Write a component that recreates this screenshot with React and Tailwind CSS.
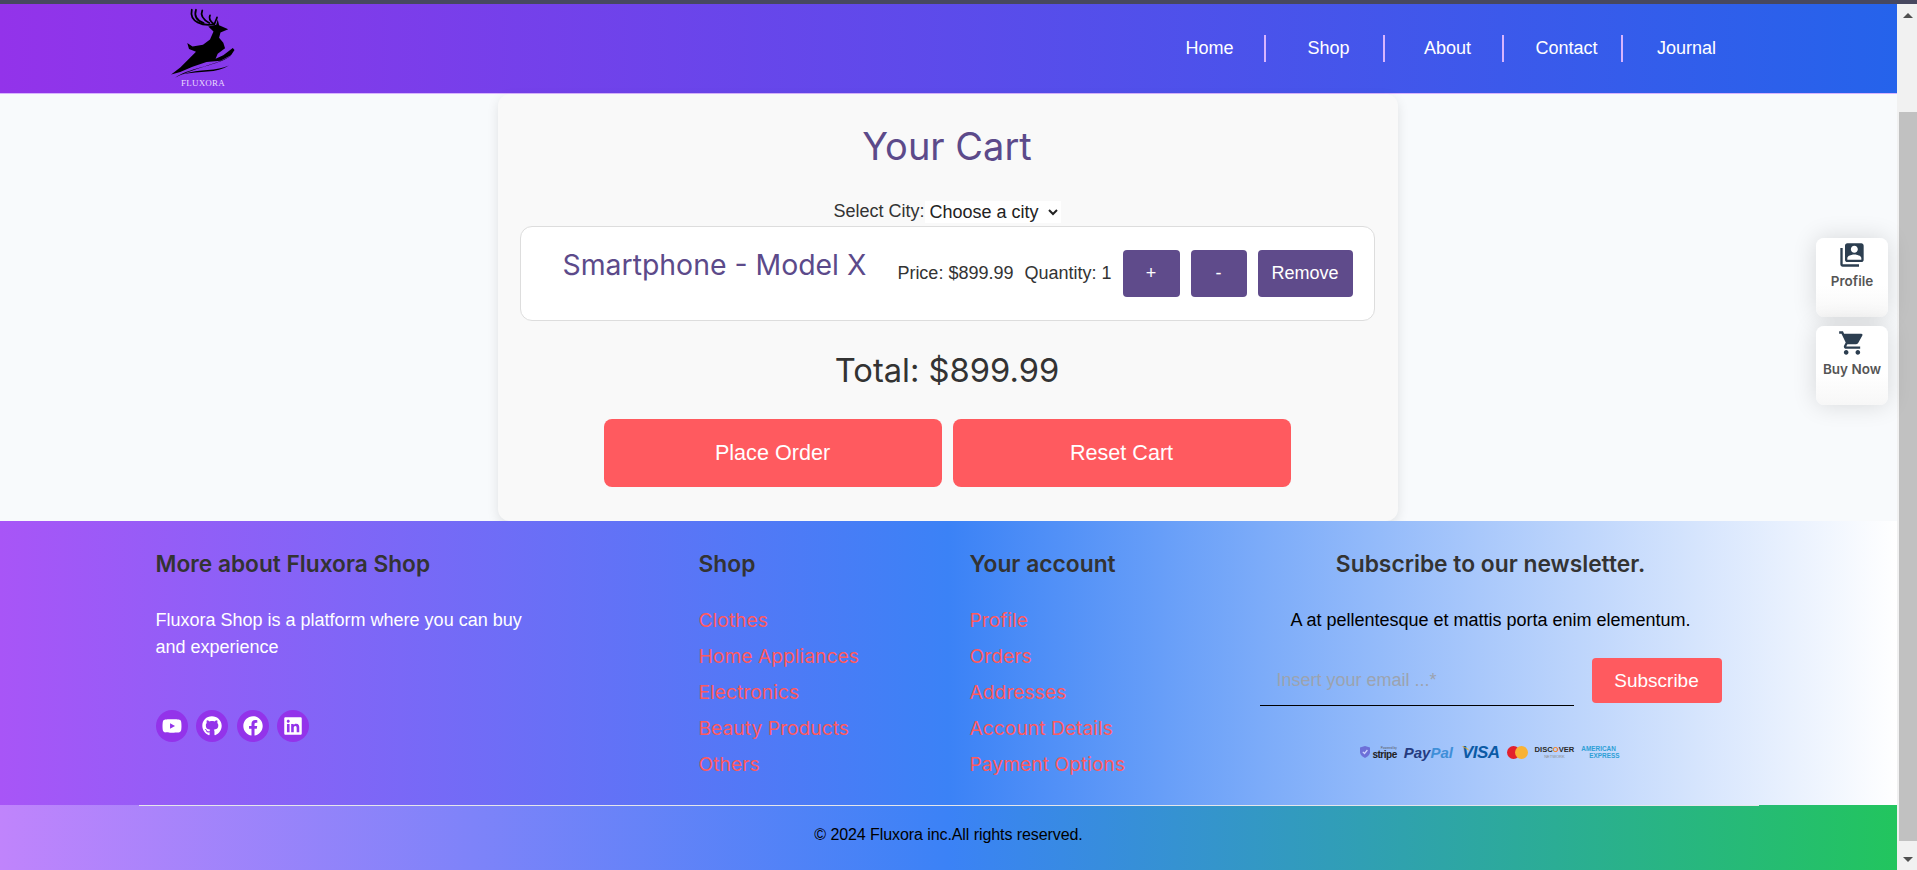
import React from 'react';
import { FaYoutube, FaGithub, FaFacebook, FaLinkedin } from 'react-icons/fa';
import { MdSwitchAccount, MdShoppingCart } from 'react-icons/md';

const NAV_ITEMS = ['Home', 'Shop', 'About', 'Contact', 'Journal'];
const SHOP_LINKS = ['Clothes', 'Home Appliances', 'Electronics', 'Beauty Products', 'Others'];
const ACCOUNT_LINKS = ['Profile', 'Orders', 'Addresses', 'Account Details', 'Payment Options'];
const SOCIALS = [FaYoutube, FaGithub, FaFacebook, FaLinkedin];

const Logo = () => (
  <div className="flex flex-col items-center w-[70px]">
    <svg viewBox="510 25 200 200" className="w-[70px] h-[70px]">
      <path
        d="M682 86 L660 95 L656 110 L668 124 L673 140 L652 156 L646 170 L668 160 L695 139 L700 145 L690 160 L660 176 L620 179 L580 193 L545 208 L519 215 L545 195 L570 170 L590 150 L570 142 L565 125 L580 135 L610 130 L630 115 L640 92 L625 78 L648 73 L652 58 L656 74 Z"
        fill="#000"
      />
      <path d="M530 224 C570 196 630 196 692 160 C660 186 600 190 530 224 Z" fill="#000" />
      <path d="M552 214 C600 198 650 206 684 189 C650 212 600 204 552 214 Z" fill="#000" />
      <g fill="none" stroke="#000" strokeWidth="5" strokeLinecap="round">
        <path d="M640 72 C610 76 570 66 578 30" />
        <path d="M612 68 C590 60 584 48 590 30" />
        <path d="M628 68 C610 58 602 46 608 32" />
        <path d="M640 70 C630 62 626 54 630 46" />
        <path d="M642 72 C645 64 648 58 650 52" />
      </g>
    </svg>
    <span className="font-['Liberation_Serif',serif] text-[9px] leading-[10px] text-[#eadcff] tracking-[0.2px]">FLUXORA</span>
  </div>
);

const Header = () => (
  <header className="h-[90px] flex items-center justify-between pl-[168px] border-b border-[#d8b4fe] bg-[linear-gradient(90deg,#9333ea,#2563eb)]">
    <Logo />
    <nav className="flex items-center pr-[155px]">
      {NAV_ITEMS.map((item, i) => (
        <a
          key={item}
          className={`w-[119px] h-[27px] pl-[8px] flex items-center justify-center text-[18px] text-white ${i < 4 ? 'border-r-2 border-[#d8b4fe]' : ''}`}
        >
          {item}
        </a>
      ))}
    </nav>
  </header>
);

const CartCard = () => (
  <section className="w-[900px] ml-[498px] h-[428px] rounded-xl bg-[#f9f9f9] shadow-[0_4px_12px_rgba(0,0,0,0.1)] pl-[21px] pr-[23px] pt-[25px] flex flex-col items-center">
    <h2 className="font-['Inter',sans-serif] text-[38px] leading-[54px] text-[#5c4a8a]">Your Cart</h2>
    <label className="mt-[28px] h-[22px] flex items-center text-[18px] text-[#333]">
      <span>Select City:</span>
      <select defaultValue="" className="w-[136px] pl-[1px] bg-white text-[18px] h-[22px] text-[#222]">
        <option value="">Choose a city</option>
      </select>
    </label>
    <div className="mt-[3px] w-[855px] h-[95px] rounded-xl border border-[#ddd] bg-white flex items-center justify-between pl-[42px] pr-[21px]">
      <h3 className="font-['Inter',sans-serif] text-[28.4px] leading-[40px] mb-[16px] text-[#5c4a8a]">Smartphone - Model X</h3>
      <div className="flex items-center text-[18px] text-[#333]">
        <span className="mr-[11px]">Price: $899.99</span>
        <span className="mr-[11px]">Quantity: 1</span>
        <div className="flex items-center gap-[11px] text-white">
          <button className="w-[57px] h-[47px] rounded bg-[#5f4b8b]">+</button>
          <button className="w-[56px] h-[47px] rounded bg-[#5f4b8b]">-</button>
          <button className="w-[95px] h-[47px] rounded bg-[#5f4b8b]">Remove</button>
        </div>
      </div>
    </div>
    <div className="mt-[25px] font-['Inter',sans-serif] text-[32.7px] leading-[48px] text-[#333]">Total: $899.99</div>
    <div className="mt-[25px] flex gap-[11px]">
      <button className="w-[338px] h-[68px] rounded-lg bg-[#ff5a5f] text-white text-[21.6px]">Place Order</button>
      <button className="w-[338px] h-[68px] rounded-lg bg-[#ff5a5f] text-white text-[21.6px]">Reset Cart</button>
    </div>
  </section>
);

const LinkColumn = ({ title, links }) => (
  <div>
    <h4 className="font-['Inter',sans-serif] font-semibold text-[22.8px] leading-[30px] text-[#333]">{title}</h4>
    <ul className="mt-[28px] flex flex-col gap-[9px] font-['Inter',sans-serif] text-[19.3px] leading-[27px] text-[#ff5a5f]">
      {links.map((link) => (
        <li key={link}>{link}</li>
      ))}
    </ul>
  </div>
);

const PaymentLogos = () => (
  <div className="mt-[36px] h-[20px] flex items-center justify-center gap-[7px] pr-[1px]">
    <div className="flex items-center gap-[2px]">
      <svg viewBox="0 0 10 12" className="w-[10px] h-[12px]">
        <path d="M0 1.5 L5 0 L10 1.5 V6 C10 9 7 11 5 12 C3 11 0 9 0 6 Z" fill="#6d6fd8" />
        <path d="M2.8 5.8 L4.5 7.5 L7.4 4" fill="none" stroke="#cdd3ff" strokeWidth="1.2" />
      </svg>
      <div className="flex flex-col items-end">
        <span className="text-[3px] leading-[4px] text-[#555]">Powered by</span>
        <span className="font-bold text-[10px] leading-[9px] tracking-[-0.5px] text-[#222]">stripe</span>
      </div>
    </div>
    <span className="font-bold italic text-[15px] leading-none text-[#253b80]">
      Pay<span className="text-[#3f8fd8]">Pal</span>
    </span>
    <div className="relative ml-[2px]">
      <span className="block font-bold italic text-[17px] leading-none tracking-[-0.5px] text-[#0b5aa5]">VISA</span>
      <svg viewBox="0 0 10 6" className="absolute left-[-1px] top-[2px] w-[9px] h-[5px]">
        <path d="M0 0 C4 0.5 7 2 10 6 C7 4 4 2 0 0 Z" fill="#f2ae14" />
      </svg>
    </div>
    <svg viewBox="0 0 21 13" className="w-[21px] h-[13px]">
      <circle cx="6.5" cy="6.5" r="6.5" fill="#e3202c" />
      <circle cx="14.5" cy="6.5" r="6.5" fill="#f9b233" />
    </svg>
    <div className="flex flex-col items-center">
      <span className="text-[7.6px] leading-[9px] font-bold text-[#2a2a2a]">
        DISC<span className="text-[#f58220]">O</span>VER
      </span>
      <span className="text-[4px] leading-[5px] text-[#8a8a8a]">NETWORK</span>
    </div>
    <div className="flex flex-col items-start font-bold text-[6.4px] leading-[7px] text-[#2e9fd6]">
      <span>AMERICAN</span>
      <span className="ml-[8px]">EXPRESS</span>
    </div>
  </div>
);

const Footer = () => (
  <footer>
    <div className="h-[284px] bg-[linear-gradient(90deg,#a855f7,#3b82f6,#ffffff)]">
      <div className="w-[1620px] mx-auto pl-[17px] pt-[28px] grid grid-cols-[543px_271px_290px_462px]">
        <div>
          <h4 className="font-['Inter',sans-serif] font-semibold text-[22.7px] leading-[30px] text-[#333]">More about Fluxora Shop</h4>
          <p className="mt-[28px] w-[400px] text-[18px] leading-[27px] text-white">Fluxora Shop is a platform where you can buy and experience</p>
          <div className="mt-[49px] flex gap-[8.5px]">
            {SOCIALS.map((Icon, i) => (
              <span key={i} className="w-[32px] h-[32px] rounded-full bg-[#9333ea] flex items-center justify-center text-white text-[20px]">
                <Icon />
              </span>
            ))}
          </div>
        </div>
        <LinkColumn title="Shop" links={SHOP_LINKS} />
        <LinkColumn title="Your account" links={ACCOUNT_LINKS} />
        <div>
          <h4 className="text-center font-['Inter',sans-serif] font-semibold text-[22.8px] leading-[30px] text-[#333]">Subscribe to our newsletter.</h4>
          <p className="mt-[28px] text-center text-[18px] leading-[27px] text-black">A at pellentesque et mattis porta enim elementum.</p>
          <div className="mt-[24px] flex items-start gap-[18px]">
            <input
              placeholder="Insert your email ...*"
              className="w-[314px] h-[48px] pl-[17px] pb-[2px] bg-transparent border-b border-black text-[18px] placeholder:text-[#9ca3af]"
            />
            <button className="w-[130px] h-[45px] pt-[2px] rounded bg-[#ff5a5f] text-white text-[19px]">Subscribe</button>
          </div>
          <PaymentLogos />
        </div>
      </div>
    </div>
    <div className="h-[65px] bg-[linear-gradient(90deg,#c084fc,#3b82f6,#22c55e)]">
      <div className="w-[1620px] mx-auto border-t border-[#e5e7eb] h-full flex items-center justify-center pb-[7px] text-[16px] tracking-[-0.08px] text-black">
        © 2024 Fluxora inc.All rights reserved.
      </div>
    </div>
  </footer>
);

const SideButton = ({ icon: Icon, label }) => (
  <div className="w-[72px] h-[79px] pt-[3px] rounded-lg bg-[linear-gradient(180deg,#ffffff,#ffffff_60%,#f7f7f7)] shadow-[0_0_24px_rgba(0,0,0,0.14)] flex flex-col items-center">
    <Icon className="text-[28px] text-[#2c3e50] shrink-0" />
    <span className="mt-[2px] font-['Inter',sans-serif] font-semibold text-[13.5px] leading-[20px] text-[#555]">{label}</span>
  </div>
);

const Scrollbar = () => (
  <div className="w-[20px] shrink-0 bg-[#f1f1f1] flex flex-col pl-[2px]">
    <div className="h-[108px] pt-[9px] flex justify-center">
      <div className="w-0 h-0 border-x-[5px] border-x-transparent border-b-[5px] border-b-[#505050]" />
    </div>
    <div className="h-[729px] bg-[#c1c1c1]" />
    <div className="flex-1 pt-[16px] flex justify-center">
      <div className="w-0 h-0 border-x-[5px] border-x-transparent border-t-[5px] border-t-[#505050]" />
    </div>
  </div>
);

const App = () => (
  <div className="relative w-full h-[870px] overflow-hidden flex flex-col bg-[#f8fafc] font-['Liberation_Sans',sans-serif]">
    <div className="h-[4px] shrink-0 bg-[#474860]" />
    <div className="flex-1 flex min-h-0">
      <div className="flex-1 min-w-0 flex flex-col">
        <Header />
        <CartCard />
        <Footer />
      </div>
      <Scrollbar />
    </div>
    <div className="absolute right-[29px] top-[238px] flex flex-col gap-[9px]">
      <SideButton icon={MdSwitchAccount} label="Profile" />
      <SideButton icon={MdShoppingCart} label="Buy Now" />
    </div>
  </div>
);

export default App;
